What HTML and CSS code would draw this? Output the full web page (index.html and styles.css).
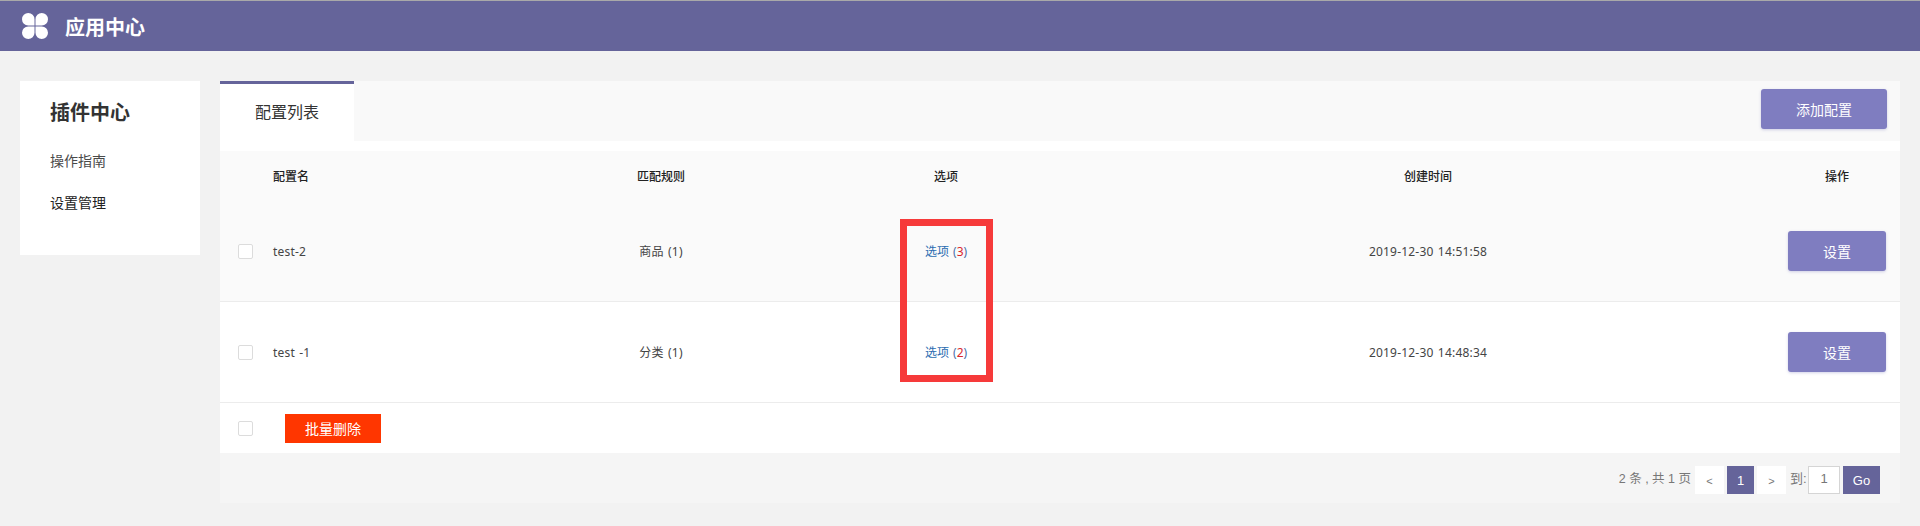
FILE: index.html
```html
<!DOCTYPE html>
<html lang="zh">
<head>
<meta charset="utf-8">
<title>应用中心</title>
<link rel="stylesheet" href="styles.css">
</head>
<body>
<header class="topbar">
  <svg class="logo" viewBox="0 0 26 26" width="26" height="26"><path fill="#fff" d="M12.500 12.500H6.250A6.250 6.250 0 1 1 12.500 6.250zM13.500 12.500V6.250A6.250 6.250 0 1 1 19.750 12.500zM12.500 13.500V19.750A6.250 6.250 0 1 1 6.250 13.500zM13.500 13.500H19.750A6.250 6.250 0 1 1 13.500 19.750z"/></svg>
  <h1 class="brand">应用中心</h1>
</header>
<div class="layout">
  <aside class="side">
    <h2 class="side-title">插件中心</h2>
    <a class="side-link">操作指南</a>
    <a class="side-link current">设置管理</a>
  </aside>
  <main class="panel">
    <div class="tabs">
      <div class="tab">配置列表</div>
      <button class="btn btn-add">添加配置</button>
    </div>
    <div class="table">
      <div class="row head">
        <span></span><span class="name">配置名</span><span>匹配规则</span><span>选项</span><span>创建时间</span><span>操作</span>
      </div>
      <div class="row body alt">
        <span class="check"></span><span class="name latin">test-2</span><span class="latin">商品 (1)</span>
        <span class="opt"><a>选项</a> (<em>3</em>)</span><span class="latin">2019-12-30 14:51:58</span>
        <span><button class="btn btn-set">设置</button></span>
      </div>
      <div class="row body">
        <span class="check"></span><span class="name latin">test -1</span><span class="latin">分类 (1)</span>
        <span class="opt"><a>选项</a> (<em>2</em>)</span><span class="latin">2019-12-30 14:48:34</span>
        <span><button class="btn btn-set">设置</button></span>
      </div>
      <div class="batch">
        <span class="check"></span>
        <button class="btn-del">批量删除</button>
      </div>
      <div class="highlight"></div>
    </div>
    <nav class="pager">
      <span class="total">2 条 , 共 1 页</span>
      <a class="pg pg-side">&lt;</a>
      <a class="pg pg-on">1</a>
      <a class="pg pg-side">&gt;</a>
      <span class="goto">到:</span>
      <span class="pg-input">1</span>
      <a class="pg-go">Go</a>
    </nav>
  </main>
</div>
</body>
</html>
```
FILE: styles.css
```css
* { box-sizing: border-box; }
html, body { margin: 0; height: 526px; overflow: hidden; }
body {
  background: #f2f2f2;
  color: #333;
  font-family: "Noto Sans", "Noto Sans CJK SC", sans-serif;
  font-size: 12px;
}
.topbar {
  height: 51px;
  background: #65649a;
  border-top: 1px solid #a9a9a9;
  display: flex;
  align-items: center;
  padding-left: 22px;
}
.logo { display: block; }
.brand {
  margin: 0 0 0 17px;
  color: #fff;
  font-size: 20px;
  font-weight: 700;
  font-family: "Noto Sans CJK SC", sans-serif;
}
.layout {
  display: flex;
  align-items: flex-start;
  gap: 20px;
  padding: 30px 20px 0;
}
.side {
  width: 180px;
  height: 174px;
  background: #fff;
  padding: 16px 0 0 30px;
  display: flex;
  flex-direction: column;
}
.side-title {
  margin: 0 0 25px;
  font-size: 20px;
  line-height: 29px;
  font-weight: 700;
  color: #333;
  font-family: "Noto Sans CJK SC", sans-serif;
}
.side-link {
  font-size: 14px;
  line-height: 20px;
  margin-bottom: 22px;
  color: #4a4a4a;
}
.side-link.current { color: #222; }
.panel {
  width: 1680px;
  background: #fff;
}
.tabs {
  height: 60px;
  background: #f9f9f9;
  display: flex;
  justify-content: space-between;
  align-items: flex-start;
  padding-right: 13px;
}
.tab {
  width: 134px;
  height: 60px;
  background: #fff;
  border-top: 3px solid #65649a;
  font-size: 16px;
  line-height: 57px;
  text-align: center;
  color: #333;
}
.btn {
  border: 0;
  background: #7f7dc0;
  color: #fff;
  border-radius: 3px;
  font: 14px "Noto Sans", "Noto Sans CJK SC", sans-serif;
  box-shadow: 0 1px 3px rgba(127,125,192,.35);
}
.btn-add { width: 126px; height: 40px; margin-top: 8px; }
.btn-set { width: 98px; height: 40px; display: block; margin: 0 auto; }
.table { margin-top: 10px; position: relative; }
.row {
  display: grid;
  grid-template-columns: 53px 239px 298px 272px 692px 126px;
  align-items: center;
  text-align: center;
}
.row .name { text-align: left; }
.head { height: 50px; background: #fafafa; font-size: 12px; color: #222; font-weight: 500; }
.body { height: 101px; border-bottom: 1px solid #ececec; background: #fff; color: #444; }
.body.alt { background: #fafafa; }
.latin { letter-spacing: .2px; word-spacing: 1px; }
.check {
  display: block;
  width: 15px;
  height: 15px;
  margin-left: 18px;
  background: #fff;
  border: 1px solid #dcdcdc;
  border-radius: 2px;
}
.opt { color: #4a6fa8; word-spacing: 1px; }
.opt a { color: #2b6cb0; }
.opt em { font-style: normal; color: #d9262c; }
.batch {
  height: 50px;
  display: flex;
  align-items: center;
}
.btn-del {
  width: 96px;
  height: 29px;
  margin-left: 32px;
  border: 0;
  background: #ff3600;
  color: #fff;
  font: 14px "Noto Sans", "Noto Sans CJK SC", sans-serif;
  padding: 0;
}
.highlight {
  position: absolute;
  left: 680px;
  top: 68px;
  width: 93px;
  height: 163px;
  border: 7px solid #f63a3a;
  pointer-events: none;
}
.pager {
  height: 50px;
  background: #f5f5f5;
  display: flex;
  align-items: flex-start;
  padding: 13px 20px 0 0;
  justify-content: flex-end;
  font-family: "Liberation Sans", "Noto Sans CJK SC", sans-serif;
  font-size: 12px;
  color: #777;
}
.total { font-size: 12.500px; line-height: 26px; margin-right: 4px; }
.pg {
  display: block;
  height: 28px;
  line-height: 30px;
  text-align: center;
}
.pg-side { width: 29px; background: #fff; color: #777; font-size: 11px; }
.pg-on { width: 27px; margin: 0 3px; background: #65649a; color: #fff; font-size: 13px; }
.goto { font-size: 13px; line-height: 26px; margin-left: 4px; width: 18px; }
.pg-input {
  width: 32px;
  height: 28px;
  background: #fff;
  border: 1px solid #d5d5d5;
  font-size: 13px;
  line-height: 24px;
  text-align: center;
}
.pg-go {
  width: 37px;
  height: 28px;
  margin-left: 3px;
  background: #65649a;
  color: #fff;
  font-size: 13px;
  line-height: 30px;
  text-align: center;
}
```
